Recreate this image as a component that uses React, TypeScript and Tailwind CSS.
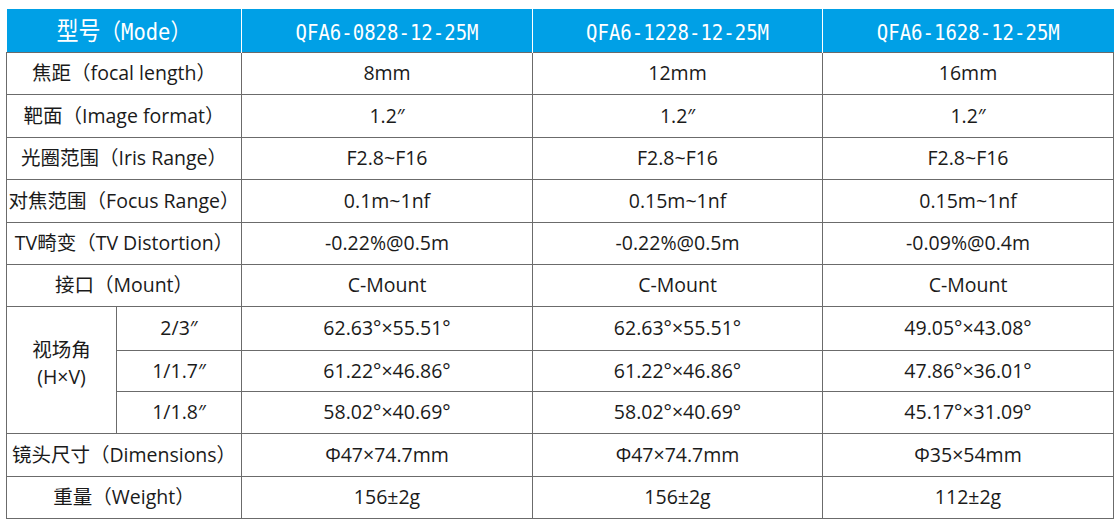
const head = ["QFA6-0828-12-25M", "QFA6-1228-12-25M", "QFA6-1628-12-25M"];

type Row = { label: string; vals: string[]; h: string };

const top: Row[] = [
  { label: "焦距（focal length）", vals: ["8mm", "12mm", "16mm"], h: "h-[42px]" },
  { label: "靶面（Image format）", vals: ["1.2″", "1.2″", "1.2″"], h: "h-[43px]" },
  { label: "光圈范围（Iris Range）", vals: ["F2.8~F16", "F2.8~F16", "F2.8~F16"], h: "h-[42px]" },
  { label: "对焦范围（Focus Range）", vals: ["0.1m~1nf", "0.15m~1nf", "0.15m~1nf"], h: "h-[43px]" },
  { label: "TV畸变（TV Distortion）", vals: ["-0.22%@0.5m", "-0.22%@0.5m", "-0.09%@0.4m"], h: "h-[42px]" },
  { label: "接口（Mount）", vals: ["C-Mount", "C-Mount", "C-Mount"], h: "h-[42px]" },
];

const fov: Row[] = [
  { label: "2/3″", vals: ["62.63°×55.51°", "62.63°×55.51°", "49.05°×43.08°"], h: "h-[44px]" },
  { label: "1/1.7″", vals: ["61.22°×46.86°", "61.22°×46.86°", "47.86°×36.01°"], h: "h-[41px]" },
  { label: "1/1.8″", vals: ["58.02°×40.69°", "58.02°×40.69°", "45.17°×31.09°"], h: "h-[42px]" },
];

const bottom: Row[] = [
  { label: "镜头尺寸（Dimensions）", vals: ["Φ47×74.7mm", "Φ47×74.7mm", "Φ35×54mm"], h: "h-[43px]" },
  { label: "重量（Weight）", vals: ["156±2g", "156±2g", "112±2g"], h: "h-[42px]" },
];

const cell = "border border-[#6b6b6b] p-0 text-center align-middle";
const mono = { fontFamily: '"DejaVu Sans Mono", "Noto Sans CJK SC", monospace' };

function Values({ vals }: { vals: string[] }) {
  return (
    <>
      {vals.map((v, i) => (
        <td key={i} className={cell}>
          {v}
        </td>
      ))}
    </>
  );
}

export default function App() {
  return (
    <div className="h-[525px] w-[1118px] bg-white pl-[6px] pt-[9px]">
      <table
        className="w-[1108px] table-fixed border-collapse text-[19.5px] text-[#1a1a1a]"
        style={{ fontFamily: '"Open Sans", "Noto Sans CJK SC", sans-serif' }}
      >
        <colgroup>
          <col className="w-[110px]" />
          <col className="w-[125px]" />
          <col className="w-[291px]" />
          <col className="w-[290px]" />
          <col className="w-[291px]" />
        </colgroup>
        <thead>
          <tr className="h-[43px] bg-[#00a0e6] text-white">
            <th colSpan={2} className="border-r border-white p-0 pt-[3px] text-center text-[20.5px] font-normal" style={mono}>
              <span className="inline-block scale-y-[1.12]">
                <span className="text-[22px]">型号</span>（Mode）
              </span>
            </th>
            {head.map((h, i) => (
              <th
                key={h}
                className={`p-0 pt-[3px] text-center text-[19px] font-normal ${i < 2 ? "border-r border-white" : ""}`}
                style={mono}
              >
                <span className="inline-block scale-y-[1.12]">{h}</span>
              </th>
            ))}
          </tr>
        </thead>
        <tbody>
          {top.map((r) => (
            <tr key={r.label} className={r.h}>
              <td colSpan={2} className={cell}>
                {r.label}
              </td>
              <Values vals={r.vals} />
            </tr>
          ))}
          {fov.map((r, i) => (
            <tr key={r.label} className={r.h}>
              {i === 0 && (
                <td rowSpan={3} className={`${cell} leading-[27px]`}>
                  <div className="-mt-[14px]">
                    视场角
                    <br />
                    (H×V)
                  </div>
                </td>
              )}
              <td className={cell}>{r.label}</td>
              <Values vals={r.vals} />
            </tr>
          ))}
          {bottom.map((r) => (
            <tr key={r.label} className={r.h}>
              <td colSpan={2} className={cell}>
                {r.label}
              </td>
              <Values vals={r.vals} />
            </tr>
          ))}
        </tbody>
      </table>
    </div>
  );
}
